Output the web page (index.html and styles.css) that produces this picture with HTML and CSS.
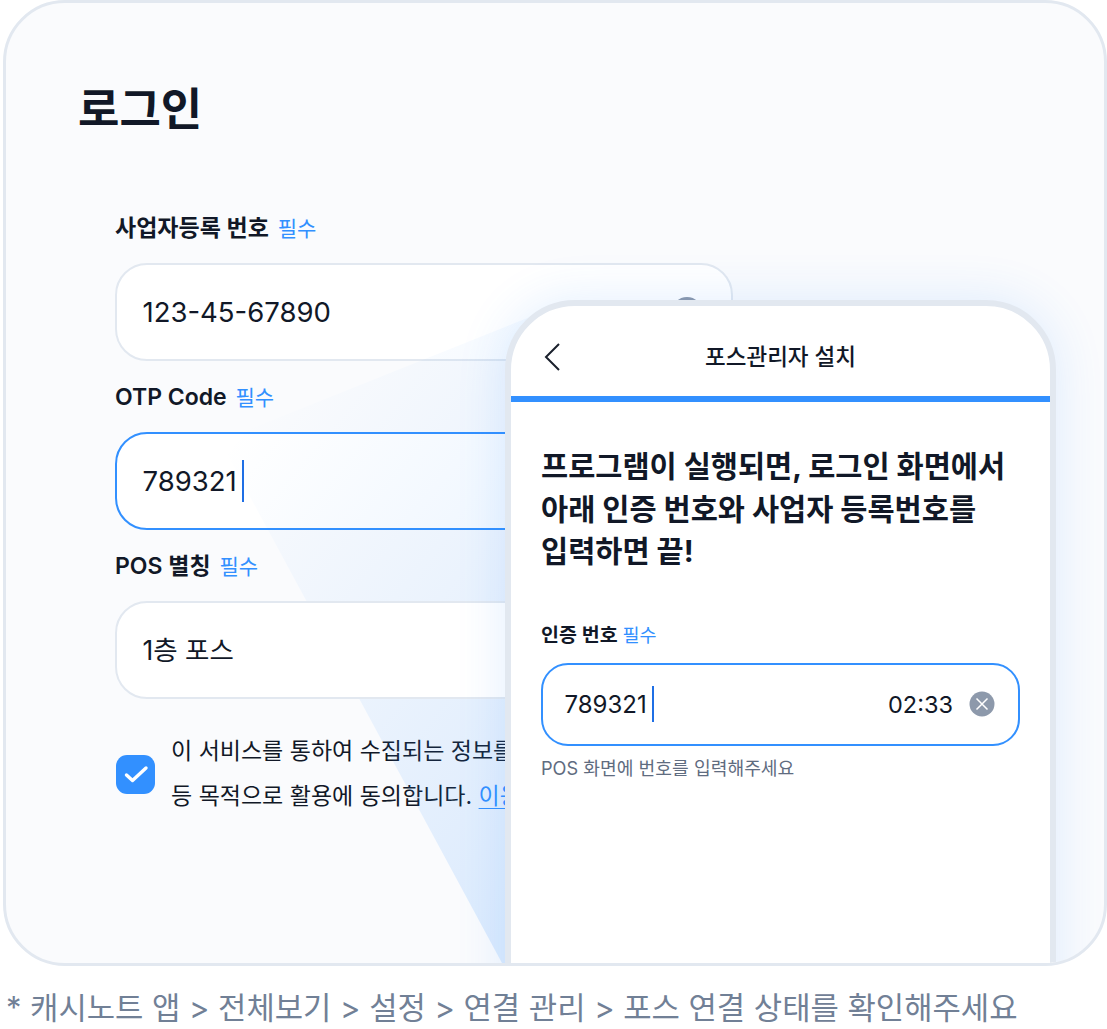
FILE: index.html
```html
<!DOCTYPE html>
<html lang="ko">
<head>
    <meta charset="UTF-8">
    <meta name="viewport" content="width=device-width, initial-scale=1.0">
    <title>로그인</title>
    <link rel="stylesheet" href="styles.css">
</head>
<body>
    <div class="card">
        <h1 class="title">로그인</h1>
        <div class="form">
            <div class="field">
                <div class="label">사업자등록 번호 <span class="req">필수</span></div>
                <div class="input">
                    <span>123-45-67890</span>
                    <svg class="clear" viewBox="0 0 30 30"><circle cx="15" cy="15" r="15" fill="#8d99ab"/></svg>
                </div>
            </div>
            <div class="field">
                <div class="label">OTP Code <span class="req">필수</span></div>
                <div class="input active"><span>789321</span><i class="caret"></i></div>
            </div>
            <div class="field">
                <div class="label">POS 별칭 <span class="req">필수</span></div>
                <div class="input above"><span>1층 포스</span></div>
            </div>
            <div class="agree">
                <div class="check">
                    <svg viewBox="0 0 39 39" width="39" height="39"><path d="M10.5 20l6 5.5L30 13" fill="none" stroke="#fff" stroke-width="3.4" stroke-linecap="round" stroke-linejoin="round"/></svg>
                </div>
                <p class="agree-text">이 서비스를 통하여 수집되는 정보를<br>등 목적으로 활용에 동의합니다. <a class="link">이용약관</a></p>
            </div>
        </div>

        <svg class="beam" viewBox="6 3 1098 960" width="1098" height="960">
            <defs>
                <linearGradient id="beamfill" gradientUnits="userSpaceOnUse" x1="230" y1="441" x2="634" y2="774">
                    <stop offset="0" stop-color="#3290ff" stop-opacity="0"/>
                    <stop offset="1" stop-color="#3290ff" stop-opacity="0.15"/>
                </linearGradient>
            </defs>
            <polygon points="220,441 540,313 600,400 600,963 502,963" fill="url(#beamfill)"/>
        </svg>

        <div class="phone">
            <div class="phone-head">
                <svg class="back" viewBox="0 0 24 30" width="24" height="30"><path d="M18 2L5 15l13 13" fill="none" stroke="#1a202c" stroke-width="2"/></svg>
                <div class="phone-title">포스관리자 설치</div>
            </div>
            <div class="bar"></div>
            <div class="phone-body">
                <h2 class="headline">프로그램이 실행되면, 로그인 화면에서<br>아래 인증 번호와 사업자 등록번호를<br>입력하면 끝!</h2>
                <div class="small-label">인증 번호 <span class="small-req">필수</span></div>
                <div class="code-input">
                    <span class="code">789321</span><i class="code-caret"></i>
                    <span class="timer">02:33</span>
                    <svg viewBox="0 0 26 26" width="26" height="26"><circle cx="13" cy="13" r="12.5" fill="#8d99ab"/><path d="M7.5 7.5l11 11M18.5 7.5l-11 11" stroke="#fff" stroke-width="1.5"/></svg>
                </div>
                <div class="help">POS 화면에 번호를 입력해주세요</div>
            </div>
        </div>
    </div>
    <div class="note">* 캐시노트 앱 &gt; 전체보기 &gt; 설정 &gt; 연결 관리 &gt; 포스 연결 상태를 확인해주세요</div>
</body>
</html>
```

FILE: styles.css
```css
body
{
    margin: 0;
    background-color: white;
    color: #111827;
    font-family: Inter, "Noto Sans CJK KR", sans-serif;
    overflow: hidden;
}
.card
{
    position: relative;
    box-sizing: border-box;
    width: 1104px;
    height: 966px;
    margin-left: 3px;
    padding: 77px 0 0 72px;
    background: #fafbfd;
    border: 3px solid #e2e8f0;
    border-radius: 62px;
    overflow: hidden;
}
.title
{
    margin: 0 0 73px;
    font-size: 45px;
    line-height: 60px;
    font-weight: 600;
}
.form
{
    width: 618px;
    margin-left: 37px;
}
.field
{
    margin-bottom: 21px;
}
.label
{
    height: 30px;
    margin-bottom: 20px;
    font-size: 23px;
    line-height: 30px;
    font-weight: 600;
}
.req
{
    margin-left: 3px;
    color: #3290ff;
    font-size: 21px;
    font-weight: 400;
}
.input
{
    box-sizing: border-box;
    display: flex;
    align-items: center;
    height: 98px;
    padding: 0 29px 0 25.5px;
    background: white;
    border: 2px solid #e2e8f0;
    border-radius: 32px;
    font-size: 27.5px;
}
.input span
{
    flex: none;
}
.active
{
    border-color: #3290ff;
}
.above
{
    position: relative;
    z-index: 2;
    padding-bottom: 3px;
    font-size: 26.5px;
}
.clear
{
    width: 30px;
    height: 30px;
    margin-left: auto;
}
.caret
{
    width: 2px;
    height: 42px;
    margin-left: 5px;
    background: #1f6fe5;
}
.agree
{
    display: flex;
    align-items: center;
    gap: 16px;
    margin-top: 30px;
    white-space: nowrap;
}
.check
{
    flex: none;
    width: 39px;
    height: 39px;
    margin-left: 1px;
    background: #3290ff;
    border-radius: 11px;
}
.agree-text
{
    margin: 0;
    font-size: 23px;
    line-height: 45px;
}
.link
{
    color: #3290ff;
    text-decoration: underline;
    text-underline-offset: 4px;
    text-decoration-thickness: 1px;
}
.beam
{
    position: absolute;
    left: 0;
    top: 0;
    z-index: 1;
}
.phone
{
    position: absolute;
    left: 499px;
    top: 297px;
    z-index: 3;
    box-sizing: border-box;
    width: 551px;
    height: 720px;
    background: white;
    border: 6px solid #e2e8f0;
    border-radius: 70px 70px 0 0;
    box-shadow: 0 0 50px rgba(50, 144, 255, 0.14);
}
.phone-head
{
    box-sizing: border-box;
    display: flex;
    align-items: center;
    height: 90px;
    padding: 8px 30px 0;
}
.back
{
    flex: none;
    margin-top: 4px;
}
.phone-title
{
    flex: 1;
    margin-right: 24px;
    text-align: center;
    font-size: 22.5px;
    font-weight: 500;
}
.bar
{
    height: 6px;
    background: #3290ff;
}
.phone-body
{
    padding: 43px 30px 0;
}
.headline
{
    margin: 0 0 50px;
    font-size: 29.5px;
    line-height: 42.5px;
    font-weight: 700;
}
.small-label
{
    height: 24px;
    margin-bottom: 16px;
    font-size: 19.5px;
    line-height: 24px;
    font-weight: 600;
}
.small-req
{
    color: #3290ff;
    font-size: 18.5px;
    font-weight: 400;
}
.code-input
{
    box-sizing: border-box;
    display: flex;
    align-items: center;
    height: 83px;
    padding: 0 23px 0 21.5px;
    border: 2px solid #3290ff;
    border-radius: 27px;
    font-size: 24px;
}
.code-caret
{
    width: 2px;
    height: 36px;
    margin-left: 5px;
    background: #1f6fe5;
}
.timer
{
    margin-left: auto;
    margin-right: 16px;
    font-size: 23.5px;
}
.help
{
    margin-top: 10px;
    font-size: 18.2px;
    line-height: 24px;
    color: #5f6c80;
}
.note
{
    margin-top: 22px;
    padding-left: 6px;
    font-size: 30.8px;
    line-height: 40px;
    color: #718096;
    white-space: nowrap;
}
```
